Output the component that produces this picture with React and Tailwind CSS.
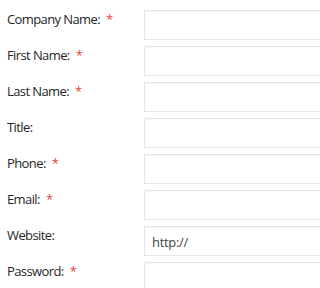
export default function App() {
  const rows = [
    { label: "Company Name:", req: true },
    { label: "First Name:", req: true },
    { label: "Last Name:", req: true },
    { label: "Title:", req: false },
    { label: "Phone:", req: true },
    { label: "Email:", req: true },
    { label: "Website:", req: false, value: "http://" },
    { label: "Password:", req: true },
  ];
  return (
    <div
      className="w-full h-[288px] overflow-hidden bg-white pt-[10px]"
      style={{ fontFamily: '"Open Sans", sans-serif' }}
    >
      {rows.map((r) => (
        <div key={r.label} className="flex h-[30px] mb-[6px]">
          <div className="w-[144px] shrink-0 pl-[7px] text-[13px] leading-[18px] tracking-[-0.6px] text-[#262626]">
            {r.label}
            {r.req && <span className="ml-[6px] text-[#e4433b]">*</span>}
          </div>
          <div className="w-[600px] shrink-0 h-[30px] border border-[#e6e6e6] bg-white shadow-[inset_0_1px_1px_rgba(0,0,0,0.03)] pl-[7px] pt-[4px] flex items-center text-[13px] tracking-[-0.3px] text-[#444]">
            {r.value || ""}
          </div>
        </div>
      ))}
    </div>
  );
}
